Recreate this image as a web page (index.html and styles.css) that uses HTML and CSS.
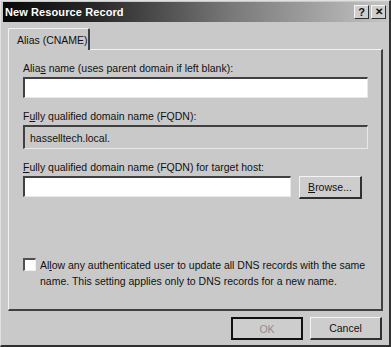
FILE: index.html
```html
<!DOCTYPE html>
<html lang="en">
<head>
  <meta charset="UTF-8" />
  <title>New Resource Record</title>
  <link rel="stylesheet" href="styles.css">
</head>
<body>

  <div class="window">
    <div class="titlebar">
      <span class="title">New Resource Record</span>
      <div class="title-buttons">
        <span class="tbtn">?</span>
        <span class="tbtn close">&#x2715;</span>
      </div>
    </div>

    <div class="content">
      <div class="tabs">
        <div class="tab active">Alias (CNAME)</div>
      </div>

      <div class="panel">
        <label class="field-label">Alia<u>s</u> name (uses parent domain if left blank):</label>
        <div class="textbox"></div>

        <label class="field-label">F<u>u</u>lly qualified domain name (FQDN):</label>
        <div class="textbox readonly">hasselltech.local.</div>

        <label class="field-label"><u>F</u>ully qualified domain name (FQDN) for target host:</label>
        <div class="row">
          <div class="textbox grow"></div>
          <button class="btn browse"><u>B</u>rowse...</button>
        </div>

        <div class="check-row">
          <span class="checkbox"></span>
          <span class="check-text">Al<u>l</u>ow any authenticated user to update all DNS records with the same<br>name. This setting applies only to DNS records for a new name.</span>
        </div>
      </div>

      <div class="footer">
        <button class="btn default" disabled>OK</button>
        <button class="btn">Cancel</button>
      </div>
    </div>
  </div>

</body>
</html>
```

FILE: styles.css
```css
body {
  margin: 0;
  padding: 0;
  background: #c9c9c9;
  font-family: "Liberation Sans", Arial, sans-serif;
  font-size: 10.5px;
  color: #111;
}

.window {
  width: 391px;
  height: 347px;
  box-sizing: border-box;
  background: #c9c9c9;
  border-top: 1px solid #e0e0e0;
  border-left: 1px solid #e0e0e0;
  border-right: 2px solid #303030;
  border-bottom: 2px solid #303030;
  padding: 1px 1px 0 2px;
  display: flex;
  flex-direction: column;
}

.titlebar {
  height: 20px;
  display: flex;
  align-items: center;
  justify-content: space-between;
  padding: 0 2px 0 2px;
  background: linear-gradient(to right, #080808 0%, #2a2a2a 25%, #7a7a7a 60%, #c4c4c4 100%);
}

.title {
  color: #fff;
  font-weight: bold;
  font-size: 11px;
  letter-spacing: 0.1px;
}

.title-buttons {
  display: flex;
  gap: 2px;
}

.tbtn {
  width: 15px;
  height: 14px;
  box-sizing: border-box;
  background: #cfcfcf;
  border-top: 1px solid #f4f4f4;
  border-left: 1px solid #f4f4f4;
  border-right: 1px solid #303030;
  border-bottom: 1px solid #303030;
  font-weight: bold;
  font-size: 11px;
  line-height: 12px;
  text-align: center;
  color: #111;
}

.tbtn.close {
  font-size: 10px;
}

.content {
  flex: 1;
  padding: 6px 5px 0 5px;
  display: flex;
  flex-direction: column;
}

.tabs {
  display: flex;
  height: 21px;
  position: relative;
  z-index: 1;
}

.tab {
  padding: 5px 0 0 8px;
  box-sizing: border-box;
  width: 82px;
  height: 22px;
  white-space: nowrap;
  background: #c9c9c9;
  border-top: 1px solid #f2f2f2;
  border-left: 1px solid #f2f2f2;
  border-right: 2px solid #404040;
  border-radius: 2px 2px 0 0;
}

.panel {
  height: 262px;
  box-sizing: border-box;
  border-top: 1px solid #f2f2f2;
  border-left: 1px solid #f2f2f2;
  border-right: 2px solid #404040;
  border-bottom: 2px solid #404040;
  padding: 11px 13px 0 14px;
  display: flex;
  flex-direction: column;
}

.field-label {
  display: block;
  height: 15px;
  line-height: 15px;
  margin-bottom: 1px;
}

.textbox {
  height: 21px;
  box-sizing: border-box;
  background: #fff;
  border-top: 2px solid #404040;
  border-left: 2px solid #404040;
  border-right: 1px solid #e8e8e8;
  border-bottom: 1px solid #e8e8e8;
  margin-bottom: 11px;
  padding: 4px 0 0 5px;
}

.textbox.readonly {
  background: #c9c9c9;
  height: 24px;
  margin-bottom: 11px;
  padding-top: 5px;
}

.row {
  display: flex;
  gap: 8px;
  align-items: flex-start;
}

.textbox.grow {
  flex: 1;
  margin-bottom: 0;
}

.btn {
  font-family: "Liberation Sans", Arial, sans-serif;
  font-size: 10.5px;
  color: #111;
  background: #cdcdcd;
  border-top: 1px solid #f4f4f4;
  border-left: 1px solid #f4f4f4;
  border-right: 2px solid #303030;
  border-bottom: 2px solid #303030;
  padding: 0;
  height: 23px;
}

.browse {
  width: 63px;
  margin-right: 6px;
}

.check-row {
  display: flex;
  gap: 4px;
  margin-top: 58px;
  align-items: flex-start;
}

.checkbox {
  width: 13px;
  height: 13px;
  flex: none;
  box-sizing: border-box;
  background: #fff;
  border-top: 2px solid #505050;
  border-left: 2px solid #505050;
  border-right: 1px solid #eee;
  border-bottom: 1px solid #eee;
  margin-top: 1px;
}

.check-text {
  line-height: 16px;
  white-space: nowrap;
}

.footer {
  display: flex;
  justify-content: flex-end;
  gap: 7px;
  padding: 6px 1px 0 0;
}

.footer .btn {
  width: 72px;
}

.btn.default {
  border: 2px solid #111;
  color: #8e8e8e;
}
```
